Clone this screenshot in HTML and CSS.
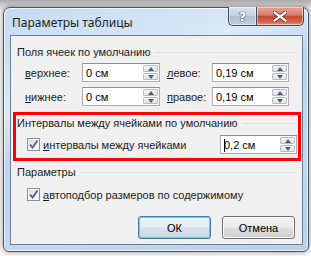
FILE: index.html
```html
<!DOCTYPE html>
<html lang="ru">
<head>
    <meta charset="UTF-8">
    <title>Параметры таблицы</title>
    <link rel="stylesheet" href="styles.css">
</head>
<body>
    <div class="window">
        <div class="titlebar">
            <span class="title">Параметры таблицы</span>
            <div class="caption-buttons">
                <div class="cap-btn help">?</div>
                <div class="cap-btn close">
                    <svg width="14" height="11" viewBox="0 0 14 11">
                        <path d="M1.5 1.5 L12.5 9.5 M12.5 1.5 L1.5 9.5" stroke="#3b2622" stroke-width="3.6" stroke-linecap="square"/>
                        <path d="M1.5 1.5 L12.5 9.5 M12.5 1.5 L1.5 9.5" stroke="#ffffff" stroke-width="2.2" stroke-linecap="square"/>
                    </svg>
                </div>
            </div>
        </div>

        <div class="client">
            <div class="group">
                <div class="group-head">
                    <span>Поля ячеек по умолчанию</span>
                    <div class="rule"></div>
                </div>
                <div class="margins">
                    <label class="lbl"><u>в</u>ерхнее:</label>
                    <div class="spin"><span class="val">0 см</span><div class="arrows"><div class="arr up"></div><div class="arr down"></div></div></div>
                    <label class="lbl lbl-right"><u>л</u>евое:</label>
                    <div class="spin"><span class="val">0,19 см</span><div class="arrows"><div class="arr up"></div><div class="arr down"></div></div></div>

                    <label class="lbl"><u>н</u>ижнее:</label>
                    <div class="spin"><span class="val">0 см</span><div class="arrows"><div class="arr up"></div><div class="arr down"></div></div></div>
                    <label class="lbl lbl-right"><u>п</u>равое:</label>
                    <div class="spin"><span class="val">0,19 см</span><div class="arrows"><div class="arr up"></div><div class="arr down"></div></div></div>
                </div>
            </div>

            <div class="group marked">
                <div class="group-head">
                    <span>Интервалы между ячейками по умолчанию</span>
                    <div class="rule"></div>
                </div>
                <div class="check-row">
                    <div class="checkbox">
                        <svg width="11" height="11" viewBox="0 0 11 11"><path d="M2 5.5 L4.5 8.5 L9.5 1.5" fill="none" stroke="#4a5f9b" stroke-width="1.9"/></svg>
                    </div>
                    <label><u>и</u>нтервалы между ячейками</label>
                    <div class="spin spin-end"><span class="val"><span class="caret"></span>0,2 см</span><div class="arrows"><div class="arr up"></div><div class="arr down"></div></div></div>
                </div>
            </div>

            <div class="group">
                <div class="group-head">
                    <span>Параметры</span>
                    <div class="rule"></div>
                </div>
                <div class="check-row check-last">
                    <div class="checkbox">
                        <svg width="11" height="11" viewBox="0 0 11 11"><path d="M2 5.5 L4.5 8.5 L9.5 1.5" fill="none" stroke="#4a5f9b" stroke-width="1.9"/></svg>
                    </div>
                    <label><u>а</u>втоподбор размеров по содержимому</label>
                </div>
            </div>

            <div class="actions">
                <button class="btn btn-default">ОК</button>
                <button class="btn">Отмена</button>
            </div>
        </div>
    </div>
</body>
</html>
```

FILE: styles.css
```css
* {
    margin: 0;
    padding: 0;
    box-sizing: border-box;
}

body {
    background: linear-gradient(#a9a9a9 0px, #e6e6e6 8px, #ffffff 14px);
    width: 311px;
    height: 256px;
    overflow: hidden;
    font-family: 'Liberation Sans', Arial, sans-serif;
    font-size: 11px;
    color: #1b1b1b;
    padding: 7px 2px 0 3px;
}

.window {
    width: 306px;
    height: 245px;
    border: 1px solid #4a5564;
    border-radius: 7px 7px 6px 6px;
    background: linear-gradient(160deg, #c4daf2 0%, #dbe9f8 30%, #bcd4ee 45%, #c3d9f1 70%, #b8d0ea 100%);
    box-shadow: 0 0 5px 1px rgba(0, 0, 0, 0.35), inset 0 0 0 1px rgba(255, 255, 255, 0.6);
    display: flex;
    flex-direction: column;
}

.titlebar {
    height: 27px;
    display: flex;
    align-items: center;
    padding-left: 8px;
    padding-right: 4px;
}

.title {
    flex: 1;
    font-family: 'Noto Sans', 'Open Sans', sans-serif;
    font-size: 12px;
    color: #1e1e1e;
    padding-top: 1px;
}

.caption-buttons {
    align-self: flex-start;
    display: flex;
    height: 19px;
    margin-top: -1px;
}

.cap-btn {
    height: 19px;
    border: 1px solid #3f4d5e;
    border-top: none;
    display: flex;
    align-items: center;
    justify-content: center;
    box-shadow: inset 0 0 0 1px rgba(255, 255, 255, 0.45);
}

.help {
    width: 28px;
    border-radius: 0 0 0 5px;
    border-right: none;
    background: linear-gradient(#d9e4f0 0%, #c3d1e0 48%, #aebfd3 52%, #bccde0 100%);
    font-family: 'DejaVu Sans', sans-serif;
    font-weight: bold;
    font-size: 13px;
    color: #ffffff;
    text-shadow: 0 0 1px #3c4a5c, 0 0 1px #3c4a5c, 0 0 1px #3c4a5c;
}

.close {
    width: 48px;
    border-radius: 0 0 5px 0;
    background: linear-gradient(#e8a493 0%, #d67f6b 45%, #c34c36 52%, #d4684c 85%, #e59a78 100%);
}

.client {
    flex: 1;
    margin: 0 5px 6px 6px;
    border: 1px solid #6f7e8f;
    background: #f0f0f0;
    padding: 9px 1px 0 2px;
    display: flex;
    flex-direction: column;
}

.group {
    padding: 0 4px;
}

.group-head {
    height: 13px;
    display: flex;
    align-items: center;
    gap: 5px;
    white-space: nowrap;
}

.rule {
    flex: 1;
    height: 1px;
    background: #d5dfe5;
    margin-top: 1px;
}

.margins {
    display: grid;
    grid-template-columns: 57px 78px 52px 77px;
    row-gap: 5px;
    padding-left: 8px;
    margin-top: 5px;
}

.lbl {
    display: flex;
    align-items: center;
}

.lbl-right {
    margin-left: 7px;
}

.spin {
    height: 19px;
    border: 1px solid #abadb3;
    border-top-color: #8e8f8f;
    background: #ffffff;
    display: flex;
    align-items: center;
    justify-content: space-between;
    padding: 1px 1px 1px 3px;
}

.val {
    position: relative;
    color: #000;
}

.caret {
    position: absolute;
    left: 0;
    top: 0;
    width: 1px;
    height: 13px;
    background: #000;
}

.arrows {
    width: 15px;
    height: 100%;
    display: flex;
    flex-direction: column;
    gap: 1px;
}

.arr {
    flex: 1;
    border: 1px solid #b8bcc3;
    border-radius: 1px;
    background: linear-gradient(#f6f6f6, #e2e3e6);
    display: flex;
    align-items: center;
    justify-content: center;
}

.arr::after {
    content: "";
    width: 0;
    height: 0;
    border-left: 3.5px solid transparent;
    border-right: 3.5px solid transparent;
}

.up::after {
    border-bottom: 4px solid #4d6185;
}

.down::after {
    border-top: 4px solid #4d6185;
}

.marked {
    margin-top: 6px;
    border: 3px solid #ff0000;
    padding: 1px 1px 4px 1px;
}

.check-row {
    display: flex;
    align-items: center;
    gap: 3px;
    padding-left: 10px;
    margin-top: 6px;
    height: 19px;
}

.checkbox {
    width: 13px;
    height: 13px;
    border: 1px solid #8e8f8f;
    background: linear-gradient(135deg, #dcdcdc, #ffffff);
    box-shadow: inset 0 0 0 1px #f4f4f4;
    display: flex;
    align-items: center;
    justify-content: center;
}

.spin-end {
    width: 77px;
    margin-left: auto;
}

.marked + .group {
    margin-top: 4px;
}

.check-last {
    margin-top: 7px;
}

.actions {
    display: flex;
    justify-content: flex-end;
    gap: 11px;
    padding-right: 6px;
    margin-top: 12px;
}

.btn {
    width: 73px;
    height: 23px;
    border: 1px solid #707070;
    border-radius: 3px;
    background: linear-gradient(#f2f2f2 0%, #ebebeb 48%, #dddddd 52%, #cfcfcf 100%);
    box-shadow: inset 0 0 0 1px #fcfcfc;
    font-family: 'Liberation Sans', Arial, sans-serif;
    font-size: 11px;
    color: #000;
}

.btn-default {
    border-color: #3c7fb1;
    box-shadow: inset 0 0 0 1px #48d7fb;
    background: linear-gradient(#eef4f9 0%, #e4ecf3 48%, #d5e0ea 52%, #c9d8e5 100%);
}
```
